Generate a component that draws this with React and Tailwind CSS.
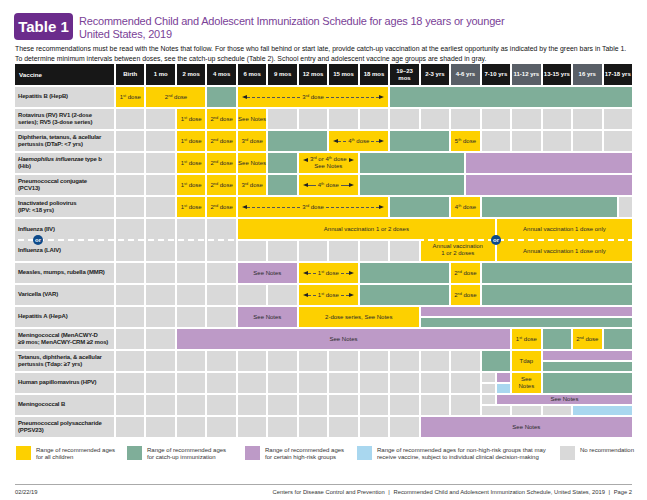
import React from 'react';

// grid placement lookups (34 half-columns so bars can stop mid-column)
const START = [
  '', 'col-start-1', 'col-start-2', 'col-start-3', 'col-start-4', 'col-start-5', 'col-start-6', 'col-start-7',
  'col-start-8', 'col-start-9', 'col-start-10', 'col-start-11', 'col-start-12', 'col-start-13', 'col-start-14',
  'col-start-15', 'col-start-16', 'col-start-17', 'col-start-18', 'col-start-19', 'col-start-20', 'col-start-21',
  'col-start-22', 'col-start-23', 'col-start-24', 'col-start-25', 'col-start-26', 'col-start-27', 'col-start-28',
  'col-start-29', 'col-start-30', 'col-start-31', 'col-start-32', 'col-start-33', 'col-start-34',
];
const SPAN = [
  '', 'col-span-1', 'col-span-2', 'col-span-3', 'col-span-4', 'col-span-5', 'col-span-6', 'col-span-7',
  'col-span-8', 'col-span-9', 'col-span-10', 'col-span-11', 'col-span-12', 'col-span-13', 'col-span-14',
  'col-span-15', 'col-span-16', 'col-span-17', 'col-span-18', 'col-span-19', 'col-span-20', 'col-span-21',
  'col-span-22', 'col-span-23', 'col-span-24', 'col-span-25', 'col-span-26', 'col-span-27', 'col-span-28',
  'col-span-29', 'col-span-30', 'col-span-31', 'col-span-32', 'col-span-33', 'col-span-34',
];
const ROW = { full: 'row-start-1 row-span-2', top: 'row-start-1', bot: 'row-start-2' };
const FILL = {
  y: 'bg-[#fdd000]',
  g: 'bg-[#7fae99]',
  p: 'bg-[#bd9ac7]',
  b: 'bg-[#a9d7ef]',
  n: 'bg-[#d9d9d9]',
};

const cell = (k) => (at, w, t = null, row = 'full', extra = '') => ({ k, at, w, t, row, extra });
const Y = cell('y');
const G = cell('g');
const P = cell('p');
const B = cell('b');
const N = cell('n');
const grays = (from, to, row = 'full') => {
  const out = [];
  for (let i = from; i <= to; i++) out.push(N(i, 1, null, row));
  return out;
};

const o = (n, s) => (
  <>
    {n}
    <sup className="text-[3.8px]">{s}</sup>
  </>
);
const dose = (n, s) => <>{o(n, s)} dose</>;

const TriL = () => <span className="h-0 w-0 shrink-0 border-y-[2px] border-r-[5px] border-y-transparent border-r-[#222]" />;
const TriR = () => <span className="h-0 w-0 shrink-0 border-y-[2px] border-l-[5px] border-y-transparent border-l-[#222]" />;

function Arrow({ children, solid }) {
  const line = solid ? 'border-solid' : 'border-dashed';
  return (
    <div className="flex w-full items-center px-[4px]">
      <TriL />
      <span className={`h-0 flex-1 border-t ${line} border-[#555]`} />
      <span className="whitespace-nowrap px-[2px]">{children}</span>
      <span className={`h-0 flex-1 border-t ${line} border-[#555]`} />
      <TriR />
    </div>
  );
}

const ROWS = [
  {
    name: 'Hepatitis B (HepB)',
    cells: [Y(0, 1, dose(1, 'st')), Y(1, 2, dose(2, 'nd')), G(3, 1), Y(4, 5, <Arrow>{dose(3, 'rd')}</Arrow>), G(9, 8)],
  },
  {
    name: (
      <>
        Rotavirus (RV) RV1 (2-dose
        <br />
        series); RV5 (3-dose series)
      </>
    ),
    cells: [...grays(0, 1), Y(2, 1, dose(1, 'st')), Y(3, 1, dose(2, 'nd')), Y(4, 1, 'See Notes'), ...grays(5, 16)],
  },
  {
    name: (
      <>
        Diphtheria, tetanus, &amp; acellular
        <br />
        pertussis (DTaP: &lt;7 yrs)
      </>
    ),
    cells: [
      ...grays(0, 1),
      Y(2, 1, dose(1, 'st')),
      Y(3, 1, dose(2, 'nd')),
      Y(4, 1, dose(3, 'rd')),
      G(5, 2),
      Y(7, 2, <Arrow>{dose(4, 'th')}</Arrow>),
      G(9, 2),
      Y(11, 1, dose(5, 'th')),
      ...grays(12, 16),
    ],
  },
  {
    name: (
      <>
        <i>Haemophilus influenzae</i> type b
        <br />
        (Hib)
      </>
    ),
    cells: [
      ...grays(0, 1),
      Y(2, 1, dose(1, 'st')),
      Y(3, 1, dose(2, 'nd')),
      Y(4, 1, 'See Notes'),
      G(5, 1),
      Y(
        6,
        2,
        <div className="flex flex-col items-center">
          <div className="flex items-center gap-[2px]">
            <TriL />
            <span>
              {o(3, 'rd')} or {o(4, 'th')} dose
            </span>
            <TriR />
          </div>
          <span>See Notes</span>
        </div>
      ),
      G(8, 3.5),
      P(11.5, 5.5),
    ],
  },
  {
    name: (
      <>
        Pneumococcal conjugate
        <br />
        (PCV13)
      </>
    ),
    cells: [
      ...grays(0, 1),
      Y(2, 1, dose(1, 'st')),
      Y(3, 1, dose(2, 'nd')),
      Y(4, 1, dose(3, 'rd')),
      G(5, 1),
      Y(6, 2, <Arrow solid>{dose(4, 'th')}</Arrow>),
      G(8, 3.5),
      P(11.5, 5.5),
    ],
  },
  {
    name: (
      <>
        Inactivated poliovirus
        <br />
        (IPV: &lt;18 yrs)
      </>
    ),
    cells: [
      ...grays(0, 1),
      Y(2, 1, dose(1, 'st')),
      Y(3, 1, dose(2, 'nd')),
      Y(4, 5, <Arrow>{dose(3, 'rd')}</Arrow>),
      G(9, 2),
      Y(11, 1, dose(4, 'th')),
      G(12, 4.5),
      N(16.5, 0.5),
    ],
  },
  {
    flu: true,
    name: (
      <div className="flex flex-col gap-[14px]">
        <span>Influenza (IIV)</span>
        <span>Influenza (LAIV)</span>
      </div>
    ),
    cells: [
      ...grays(0, 3),
      Y(4, 8.5, 'Annual vaccination 1 or 2 doses', 'top'),
      ...grays(4, 9, 'bot'),
      Y(
        10,
        2.5,
        <>
          Annual vaccination
          <br />1 or 2 doses
        </>,
        'bot',
        '-mt-[2px]'
      ),
      Y(
        12.5,
        4.5,
        <div className="flex flex-col gap-[15px]">
          <span>Annual vaccination 1 dose only</span>
          <span>Annual vaccination 1 dose only</span>
        </div>
      ),
    ],
  },
  {
    name: 'Measles, mumps, rubella (MMR)',
    cells: [
      ...grays(0, 3),
      P(4, 2, 'See Notes'),
      Y(6, 2, <Arrow>{dose(1, 'st')}</Arrow>),
      G(8, 3),
      Y(11, 1, dose(2, 'nd')),
      G(12, 5),
    ],
  },
  {
    name: 'Varicella (VAR)',
    cells: [...grays(0, 5), Y(6, 2, <Arrow>{dose(1, 'st')}</Arrow>), G(8, 3), Y(11, 1, dose(2, 'nd')), G(12, 5)],
  },
  {
    name: 'Hepatitis A (HepA)',
    cells: [
      ...grays(0, 3),
      P(4, 2, 'See Notes'),
      Y(6, 4, '2-dose series, See Notes'),
      P(10, 7, null, 'top'),
      G(10, 7, null, 'bot'),
    ],
  },
  {
    name: (
      <>
        Meningococcal (MenACWY-D
        <br />
        ≥9 mos; MenACWY-CRM ≥2 mos)
      </>
    ),
    cells: [
      ...grays(0, 1),
      P(2, 11, 'See Notes'),
      Y(13, 1, dose(1, 'st')),
      G(14, 1),
      Y(15, 1, dose(2, 'nd')),
      G(16, 1),
    ],
  },
  {
    name: (
      <>
        Tetanus, diphtheria, &amp; acellular
        <br />
        pertussis (Tdap: ≥7 yrs)
      </>
    ),
    cells: [...grays(0, 11), G(12, 1), Y(13, 1, 'Tdap'), P(14, 3, null, 'top'), G(14, 3, null, 'bot')],
  },
  {
    name: 'Human papillomavirus (HPV)',
    cells: [
      ...grays(0, 11),
      N(12, 0.5, null, 'top'),
      N(12, 0.5, null, 'bot'),
      P(12.5, 0.5, null, 'top'),
      B(12.5, 0.5, null, 'bot'),
      Y(
        13,
        1,
        <>
          See
          <br />
          Notes
        </>
      ),
      G(14, 3),
    ],
  },
  {
    name: 'Meningococcal B',
    cells: [
      ...grays(0, 11),
      N(12, 0.5, null, 'top'),
      P(12.5, 4.5, 'See Notes', 'top'),
      N(12, 1, null, 'bot'),
      N(13, 1, null, 'bot'),
      N(14, 1, null, 'bot'),
      B(15, 2, null, 'bot'),
    ],
  },
  {
    name: (
      <>
        Pneumococcal polysaccharide
        <br />
        (PPSV23)
      </>
    ),
    cells: [...grays(0, 9), P(10, 7, 'See Notes')],
  },
];

const AGES = [
  ['Birth'],
  ['1 mo'],
  ['2 mos'],
  ['4 mos'],
  ['6 mos'],
  ['9 mos'],
  ['12 mos'],
  ['15 mos'],
  ['18 mos'],
  ['19–23', 'mos'],
  ['2-3 yrs'],
  ['4-6 yrs', null, true],
  ['7-10 yrs'],
  ['11-12 yrs', null, true],
  ['13-15 yrs'],
  ['16 yrs', null, true],
  ['17-18 yrs'],
];

const LEGEND = [
  ['bg-[#fdd000]', 'w-[111px]', 'Range of recommended ages', 'for all children'],
  ['bg-[#7fae99]', 'w-[118px]', 'Range of recommended ages', 'for catch-up immunization'],
  ['bg-[#bd9ac7]', 'w-[112px]', 'Range of recommended ages', 'for certain high-risk groups'],
  [
    'bg-[#a9d7ef]',
    'w-[203px]',
    'Range of recommended ages for non-high-risk groups that may',
    'receive vaccine, subject to individual clinical decision-making',
  ],
  ['bg-[#d9d9d9]', 'w-[70px]', 'No recommendation', ''],
];

function Cell({ c }) {
  const start = START[Math.round(c.at * 2) + 1];
  const span = SPAN[Math.round(c.w * 2)];
  return (
    <div
      className={`${start} ${span} ${ROW[c.row]} ${FILL[c.k]} ${c.extra} flex min-w-0 items-center whitespace-nowrap text-center text-[6px] leading-[7px] text-[#2a2a2a]`}
    >
      {c.t && <div className="flex w-full justify-center">{typeof c.t === 'string' ? c.t : <span className="w-full">{c.t}</span>}</div>}
    </div>
  );
}

function ScheduleRow({ row }) {
  return (
    <div className={`relative flex gap-[2px] ${row.flu ? 'h-[42px]' : 'h-[20px]'}`}>
      <div className="flex w-[99px] shrink-0 items-center whitespace-nowrap bg-[#d9d9d9] px-[3px] text-[6px] font-bold leading-[7.5px] tracking-[-0.15px] text-[#222]">
        <div>{row.name}</div>
      </div>
      <div
        className={`grid flex-1 grid-cols-[repeat(34,minmax(0,1fr))] gap-[2px] ${
          row.flu ? 'grid-rows-[20px_20px]' : 'grid-rows-[9px_9px]'
        }`}
      >
        {row.cells.map((c, i) => (
          <Cell key={i} c={c} />
        ))}
      </div>
      {row.flu && (
        <>
          <div className="pointer-events-none absolute left-[3px] right-0 top-[20px] h-[2px] bg-[repeating-linear-gradient(90deg,#fff_0px,#fff_6px,transparent_6px,transparent_10px)]" />
          <div className="absolute left-[18px] top-[16px] flex h-[10px] w-[10px] items-center justify-center rounded-full bg-[#0d4a8a] text-[6px] font-bold leading-none text-white">
            or
          </div>
          <div className="absolute left-[476px] top-[16px] flex h-[10px] w-[10px] items-center justify-center rounded-full bg-[#0d4a8a] text-[6px] font-bold leading-none text-white">
            or
          </div>
        </>
      )}
    </div>
  );
}

export default function App() {
  return (
    <div className="flex h-[500px] w-[647px] flex-col overflow-hidden bg-white px-[15px] pt-[13px] font-['Liberation_Sans',Arial,sans-serif] text-[#222]">
      {/* Title */}
      <header className="-ml-[1px] flex items-start gap-[6px]">
        <div className="flex h-[27px] w-[59px] items-center justify-center rounded-[4px] bg-[#6b2c8c] text-[15px] font-bold leading-none text-white">
          Table 1
        </div>
        <h1 className="pt-[2px] text-[11px] leading-[13px] tracking-[-0.2px] text-[#7a3f97]">
          Recommended Child and Adolescent Immunization Schedule for ages 18 years or younger
          <br />
          United States, 2019
        </h1>
      </header>

      <p className="mt-[3px] whitespace-nowrap text-[6.9px] leading-[9.5px] text-[#111]">
        These recommendations must be read with the Notes that follow. For those who fall behind or start late, provide
        catch-up vaccination at the earliest opportunity as indicated by the green bars in Table 1.
        <br />
        To determine minimum intervals between doses, see the catch-up schedule (Table 2). School entry and adolescent
        vaccine age groups are shaded in gray.
      </p>

      {/* Table */}
      <div className="mt-[1px] flex flex-col gap-[2px]">
        <div className="flex h-[21px] gap-[2px]">
          <div className="flex w-[99px] shrink-0 items-center bg-[#171717] px-[4px] text-[6.2px] font-bold text-white">
            Vaccine
          </div>
          <div className="grid flex-1 grid-cols-[repeat(17,minmax(0,1fr))] gap-[2px]">
            {AGES.map(([a, b, gray]) => (
              <div
                key={a}
                className={`flex flex-col items-center justify-center whitespace-nowrap text-center text-[6px] font-bold leading-[7px] text-white ${
                  gray ? 'bg-[#595f67]' : 'bg-[#171717]'
                }`}
              >
                <span>{a}</span>
                {b && <span>{b}</span>}
              </div>
            ))}
          </div>
        </div>
        {ROWS.map((row, i) => (
          <ScheduleRow key={i} row={row} />
        ))}
      </div>

      {/* Legend */}
      <div className="mt-[9px] flex pl-[1px]">
        {LEGEND.map(([bg, w, l1, l2]) => (
          <div key={l1 + l2} className={`flex shrink-0 items-start gap-[5px] ${w}`}>
            <span className={`h-[14px] w-[15px] shrink-0 ${bg}`} />
            <div className="whitespace-nowrap pt-[1px] text-[6px] leading-[7px] text-[#333]">
              {l1}
              <br />
              {l2}
            </div>
          </div>
        ))}
      </div>

      {/* Footer */}
      <footer className="mt-auto border-t border-[#aaa] pb-[4px] pt-[4px]">
        <div className="flex justify-between text-[5.8px] leading-[7px] text-[#333]">
          <span>02/22/19</span>
          <span>
            Centers for Disease Control and Prevention <span className="px-[2px]">|</span> Recommended Child and Adolescent
            Immunization Schedule, United States, 2019 <span className="px-[2px]">|</span> Page 2
          </span>
        </div>
      </footer>
    </div>
  );
}
